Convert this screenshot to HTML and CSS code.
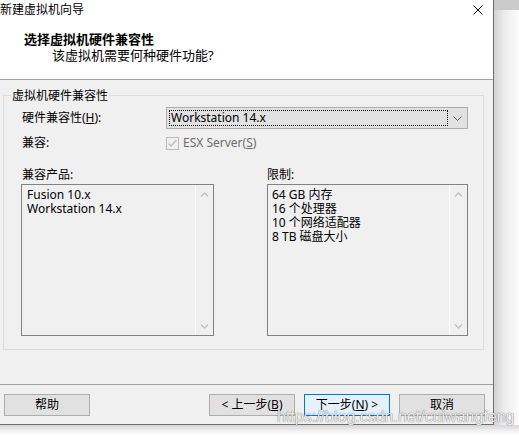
FILE: index.html
```html
<!DOCTYPE html>
<html lang="zh-CN">
<head>
<meta charset="utf-8">
<title>新建虚拟机向导</title>
<link rel="stylesheet" href="styles.css">
</head>
<body>
<div class="screen">
  <div class="main">
    <div class="dialog">
      <div class="header">
        <div class="titlebar">
          <span class="title">新建虚拟机向导</span>
          <svg class="close" width="10" height="10" viewBox="0 0 10 10"><path d="M0.5 0.5 L9.5 9.5 M9.5 0.5 L0.5 9.5" stroke="#000" stroke-width="1" fill="none"/></svg>
        </div>
        <div class="h-title">选择虚拟机硬件兼容性</div>
        <div class="h-sub">该虚拟机需要何种硬件功能?</div>
      </div>
      <div class="body">
        <div class="group">
          <span class="legend">虚拟机硬件兼容性</span>
          <div class="form">
            <div class="label">硬件兼容性(<u>H</u>):</div>
            <div class="combo">
              <div class="combo-text">Workstation 14.x</div>
              <div class="combo-arrow"><svg width="9" height="5" viewBox="0 0 9 5"><path d="M0.5 0.5 L4.5 4.5 L8.5 0.5" stroke="#606060" fill="none"/></svg></div>
            </div>
            <div class="label">兼容:</div>
            <div class="check">
              <span class="box"><svg width="11" height="11" viewBox="0 0 11 11"><path d="M1.5 5.5 L4 8 L9.5 2" stroke="#bcbcbc" stroke-width="1.3" fill="none"/></svg></span>
              <span class="check-text">ESX Server(<u>S</u>)</span>
            </div>
          </div>
          <div class="lists">
            <div class="col col-left">
              <div class="label">兼容产品:</div>
              <div class="listbox">
                <div class="items">
                  <div>Fusion 10.x</div>
                  <div>Workstation 14.x</div>
                </div>
                <div class="sb">
                  <svg width="9" height="8" viewBox="0 0 9 8"><path d="M1 5.5 L4.5 2 L8 5.5" stroke="#c2c2c2" stroke-width="1.4" fill="none"/></svg>
                  <svg width="9" height="8" viewBox="0 0 9 8"><path d="M1 2.5 L4.5 6 L8 2.5" stroke="#c2c2c2" stroke-width="1.4" fill="none"/></svg>
                </div>
              </div>
            </div>
            <div class="col col-right">
              <div class="label">限制:</div>
              <div class="listbox">
                <div class="items">
                  <div>64 GB 内存</div>
                  <div>16 个处理器</div>
                  <div>10 个网络适配器</div>
                  <div>8 TB 磁盘大小</div>
                </div>
                <div class="sb">
                  <svg width="9" height="8" viewBox="0 0 9 8"><path d="M1 5.5 L4.5 2 L8 5.5" stroke="#c2c2c2" stroke-width="1.4" fill="none"/></svg>
                  <svg width="9" height="8" viewBox="0 0 9 8"><path d="M1 2.5 L4.5 6 L8 2.5" stroke="#c2c2c2" stroke-width="1.4" fill="none"/></svg>
                </div>
              </div>
            </div>
          </div>
        </div>
        <div class="sep"></div>
        <div class="buttons">
          <button class="btn">帮助</button>
          <div class="btn-group">
            <button class="btn">&lt; 上一步(<u>B</u>)</button>
            <button class="btn btn-default">下一步(<u>N</u>) &gt;</button>
            <button class="btn">取消</button>
          </div>
        </div>
      </div>
    </div>
    <div class="side"></div>
  </div>
  <div class="bottom"></div>
  <div class="watermark">https://blog.csdn.net/cuiwangfeng</div>
</div>
</body>
</html>
```

FILE: styles.css
```css
html, body {
  margin: 0;
  padding: 0;
}
body {
  width: 519px;
  height: 436px;
  overflow: hidden;
  background: #fff;
  font-family: "Noto Sans", "Noto Sans CJK SC", sans-serif;
  font-size: 12px;
  color: #000;
}
.screen {
  position: relative;
  width: 519px;
  height: 436px;
  display: flex;
  flex-direction: column;
}
.main {
  display: flex;
  height: 425px;
}
.dialog {
  width: 493px;
  height: 424px;
  border-right: 1px solid #6f6f6f;
  border-bottom: 1px solid #6f6f6f;
  display: flex;
  flex-direction: column;
  background: #f0f0f0;
}
.side {
  flex: 1;
  background:
    linear-gradient(#cbcbcb, #cbcbcb) top left / 100% 10px no-repeat,
    linear-gradient(to right, #d2d2d2, #ececec 40%, #fcfcfc);
}
.bottom {
  flex: 1;
  background: linear-gradient(#d6d6d6, #f4f4f4 60%, #fff);
}

/* header */
.header {
  height: 79px;
  background: #fff;
  border-bottom: 1px solid #a0a0a0;
}
.titlebar {
  height: 20px;
  display: flex;
  align-items: center;
  justify-content: space-between;
  padding-right: 10px;
}
.title {
  line-height: 20px;
  font-size: 12px;
}
.h-title {
  margin-top: 11px;
  padding-left: 24px;
  line-height: 16px;
  font-size: 13px;
  font-weight: bold;
}
.h-sub {
  padding-left: 52px;
  line-height: 16px;
  font-size: 13px;
}

/* body */
.body {
  height: 344px;
  display: flex;
  flex-direction: column;
}
.group {
  position: relative;
  margin: 15px 0 0 3px;
  width: 479px;
  height: 253px;
  border: 1px solid #dcdcdc;
}
.legend {
  position: absolute;
  top: -8px;
  left: 7px;
  padding: 0 1px;
  line-height: 16px;
  background: #f0f0f0;
}
.form {
  margin-top: 11px;
  padding-left: 17px;
  display: grid;
  grid-template-columns: 145px 302px;
  grid-template-rows: 22px 20px;
  row-gap: 4px;
  align-items: center;
}
.label {
  padding-left: 1px;
  line-height: 14px;
}
.combo {
  height: 20px;
  border: 1px solid #adadad;
  background: #e1e1e1;
  display: flex;
}
.combo-text {
  flex: 1;
  margin: 2px 0 2px 2px;
  border: 1px dotted #000;
  padding-left: 1px;
  line-height: 14px;
}
.combo-arrow {
  width: 19px;
  display: flex;
  align-items: center;
  justify-content: center;
}
.check {
  display: flex;
  align-items: center;
}
.box {
  width: 11px;
  height: 11px;
  border: 1px solid #bcbcbc;
  background: #f0f0f0;
  display: flex;
}
.check-text {
  margin-left: 4px;
  color: #6d6d6d;
  line-height: 14px;
}
.lists {
  margin-top: 15px;
  padding-left: 17px;
  display: flex;
  gap: 53px;
}
.col-left { width: 193px; }
.col-right { width: 201px; }
.col-right .label { margin-left: -1px; }
.col .label { margin-bottom: 2px; }
.listbox {
  height: 150px;
  border: 1px solid #828282;
  background: #f0f0f0;
  display: flex;
}
.items {
  flex: 1;
  padding: 3px 4px;
  line-height: 14px;
}
.col-left .items { padding-left: 5px; }
.sb {
  width: 17px;
  border-left: 1px solid #fff;
  display: flex;
  flex-direction: column;
  justify-content: space-between;
  align-items: center;
  padding: 6px 0 5px;
}

/* footer */
.sep {
  margin-top: 34px;
  height: 1px;
  background: #a0a0a0;
}
.buttons {
  margin-top: 9px;
  padding: 0 8px 0 4px;
  display: flex;
  justify-content: space-between;
}
.btn-group {
  display: flex;
  gap: 9px;
}
.btn {
  width: 86px;
  height: 22px;
  margin: 0;
  padding: 0 0 1px;
  border: 1px solid #adadad;
  background: #e1e1e1;
  font-family: "Noto Sans", "Noto Sans CJK SC", sans-serif;
  font-size: 12px;
  color: #000;
  line-height: 12px;
}
.btn-default {
  border-color: #0078d7;
  background: #e5f1fb;
}

.watermark {
  position: absolute;
  left: 277px;
  top: 410px;
  font-family: "Liberation Sans", sans-serif;
  font-size: 16px;
  line-height: 14px;
  color: rgba(255, 255, 255, 0.9);
  text-shadow: 0 0 1px rgba(0, 0, 0, 0.5), 0 0 1px rgba(0, 0, 0, 0.3);
  white-space: nowrap;
}
```
